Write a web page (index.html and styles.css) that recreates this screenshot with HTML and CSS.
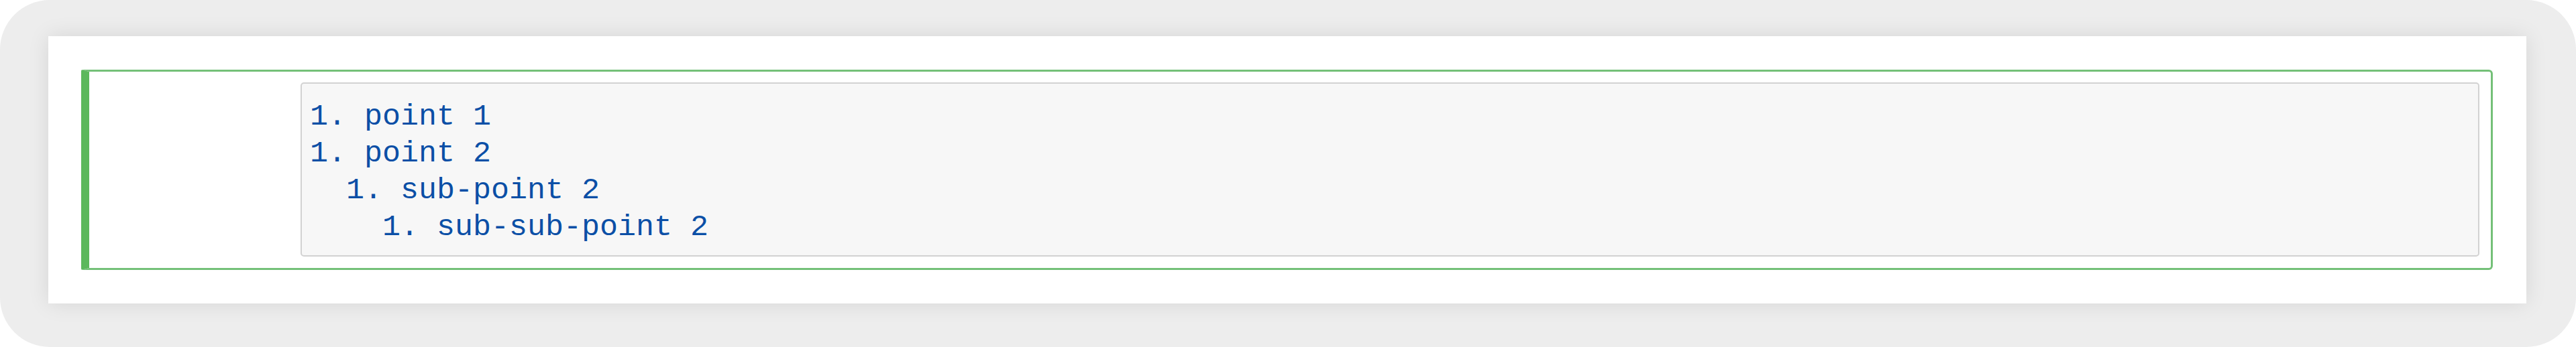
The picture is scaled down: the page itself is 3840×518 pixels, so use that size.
FILE: index.html
```html
<!DOCTYPE html>
<html lang="en">
<head>
<meta charset="utf-8">
<title>Markdown cell</title>
<link rel="stylesheet" href="styles.css">
</head>
<body>
<div class="frame">
  <div class="panel">
    <div class="cell">
      <div class="prompt"></div>
      <div class="editor">
        <pre class="code"><span class="ln">1. point 1</span>
<span class="ln">1. point 2</span>
<span class="ln">  1. sub-point 2</span>
<span class="ln">    1. sub-sub-point 2</span></pre>
      </div>
    </div>
  </div>
</div>
</body>
</html>
```

FILE: styles.css
```css
html, body {
  margin: 0;
  padding: 0;
  background: #ffffff;
}

.frame {
  box-sizing: border-box;
  width: 3840px;
  height: 518px;
  background: #ededed;
  border-radius: 74px;
  padding: 54px 74px 65px 72px;
  display: flex;
}

.panel {
  flex: 1;
  background: #ffffff;
  box-shadow: 0 0 30px rgba(0, 0, 0, 0.1);
  padding: 50px 50px 50px 49px;
  display: flex;
}

.cell {
  flex: 1;
  display: flex;
  border: 3px solid #74c078;
  border-left: 12px solid #5cb85c;
  border-radius: 2px 6px 6px 2px;
  padding: 16px 17px 17px 0;
}

.prompt {
  width: 315px;
  flex: none;
}

.editor {
  flex: 1;
  background: #f7f7f7;
  border: 2px solid #d2d2d2;
  border-radius: 5px;
  padding: 22px 12px 14px 12px;
}

.code {
  margin: 0;
  font-family: "Liberation Mono", "Courier New", monospace;
  font-size: 45px;
  line-height: 55px;
  color: #0b4fa6;
  white-space: pre;
}
```
